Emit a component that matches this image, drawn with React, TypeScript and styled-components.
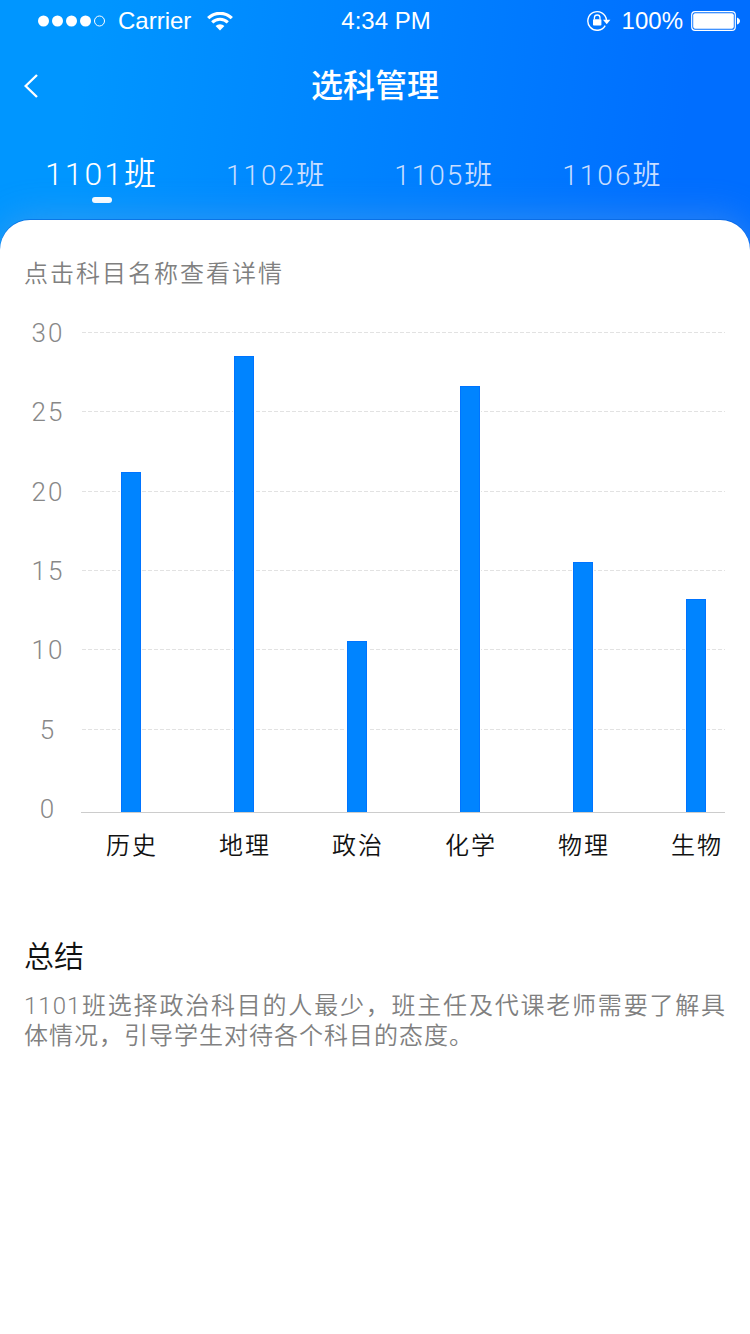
import React, { useState } from "react";
import styled, { createGlobalStyle } from "styled-components";

const GlobalStyle = createGlobalStyle`
  *, *::before, *::after { box-sizing: border-box; }
  body {
    margin: 0;
    background: #fff;
    font-family: Roboto, "Noto Sans CJK SC", sans-serif;
    font-weight: 350;
  }
  h1, h2, p, ul { margin: 0; padding: 0; }
  button {
    border: 0;
    padding: 0;
    background: none;
    color: inherit;
    font: inherit;
    cursor: pointer;
  }
`;

const Page = styled.div`
  display: flex;
  flex-direction: column;
  min-height: 100vh;
`;

const Header = styled.header`
  padding-bottom: 30px;
  margin-bottom: -30px;
  color: #fff;
  background: linear-gradient(97deg, #0096ff 12%, #006eff 90%);
`;

const StatusBar = styled.div`
  display: grid;
  grid-template-columns: 1fr auto 1fr;
  align-items: center;
  height: 42px;
  padding: 0 10px 0 32px;
  font: 400 24px/28px "Liberation Sans", Arial, sans-serif;
`;

const StatusGroup = styled.div<{ $end?: boolean }>`
  display: flex;
  align-items: center;
  justify-content: ${(p) => (p.$end ? "flex-end" : "flex-start")};
  padding-left: 6px;
`;

const SignalIcon = styled.svg`
  margin-right: 13px;
`;

const WifiIcon = styled.svg`
  margin-left: 16px;
`;

const LockIcon = styled.svg`
  margin-right: 11px;
`;

const BatteryIcon = styled.svg`
  margin-left: 8px;
`;

const NavBar = styled.nav`
  display: grid;
  grid-template-columns: 1fr auto 1fr;
  align-items: center;
  height: 88px;
  padding: 0 24px;
`;

const BackButton = styled.button`
  display: flex;
  justify-self: start;
  padding: 16px 16px 16px 0;
`;

const Title = styled.h1`
  font-size: 32px;
  line-height: 40px;
  font-weight: 500;
`;

const TabList = styled.div`
  display: flex;
  align-items: baseline;
  gap: 68px;
  height: 90px;
  padding: 24px 45px 0;
`;

const Tab = styled.button<{ $active: boolean }>`
  display: flex;
  flex-direction: column;
  align-items: center;
  gap: 3px;
  flex: none;
  font-size: ${(p) => (p.$active ? 32 : 28)}px;
  line-height: 40px;
  letter-spacing: 2px;
  color: ${(p) => (p.$active ? "#fff" : "#c9deff")};

  &::after {
    content: "";
    width: 20px;
    height: 6px;
    border-radius: 3px;
    background: ${(p) => (p.$active ? "#fff" : "transparent")};
  }
`;

const Card = styled.main`
  flex: 1;
  padding: 38px 24px;
  border-radius: 30px 30px 0 0;
  background: #fff;
  box-shadow: 0 -1px 0 rgba(0, 96, 220, 0.6), 0 -2px 36px rgba(110, 165, 225, 0.45);
`;

const Hint = styled.p`
  font-size: 24px;
  line-height: 32px;
  letter-spacing: 2px;
  color: #808080;
`;

const Chart = styled.section`
  display: grid;
  grid-template-columns: 57px 1fr;
  margin-top: 42px;
`;

const Scale = styled.div`
  display: flex;
  flex-direction: column;
  align-items: center;
  justify-content: space-between;
  height: 508px;
  margin: -15px 0 -12px;
  padding-right: 9px;
  font-size: 26px;
  line-height: 32px;
  letter-spacing: 2px;
  color: #888;
`;

const Plot = styled.div`
  display: grid;
  height: 481px;
  margin-right: 1px;
  border-bottom: 1px solid #ccc;
`;

const GridLines = styled.div`
  grid-area: 1 / 1;
  display: grid;
  grid-template-rows: repeat(6, 1fr);
  padding: 0 0 4px 1px;
`;

const GridLine = styled.div`
  height: 1px;
  background: repeating-linear-gradient(90deg, #e2e2e2 0 4px, #fff 4px 6px);
`;

const Bars = styled.div`
  grid-area: 1 / 1;
  display: flex;
  align-items: flex-end;
  justify-content: space-between;
  padding: 0 3px 0 24px;
`;

const Bar = styled.div`
  width: 20px;
  margin: 0 16px;
  border: solid #0074ff;
  border-width: 1px 1px 0;
  background: #0084ff;
  box-shadow: 0 0 0 1px #fff;
  clip-path: inset(-1px -1px 0);
`;

const Subjects = styled.div`
  grid-column: 2;
  display: flex;
  justify-content: space-between;
  margin-top: 17px;
  padding: 0 3px 0 25px;
`;

const Subject = styled.button`
  width: 52px;
  font-size: 24px;
  line-height: 32px;
  letter-spacing: 2px;
  white-space: nowrap;
  color: #111;
`;

const Summary = styled.section`
  margin-top: 75px;
`;

const SummaryTitle = styled.h2`
  font-size: 30px;
  line-height: 40px;
  font-weight: 350;
  color: #111;
`;

const SummaryText = styled.p`
  margin-top: 14px;
  font-size: 24px;
  line-height: 30px;
  letter-spacing: 1px;
  text-align: justify;
  color: #808080;
`;

const classes = ["1101班", "1102班", "1105班", "1106班"];
const ticks = [30, 25, 20, 15, 10, 5, 0];
const maxValue = 30;
const subjects = [
  { name: "历史", value: 21.25 },
  { name: "地理", value: 28.5 },
  { name: "政治", value: 10.7 },
  { name: "化学", value: 26.6 },
  { name: "物理", value: 15.6 },
  { name: "生物", value: 13.3 },
];

export default function App() {
  const [active, setActive] = useState(0);

  return (
    <Page>
      <GlobalStyle />
      <Header>
        <StatusBar>
          <StatusGroup>
            <SignalIcon width="67" height="12" viewBox="0 0 67 12" fill="#fff" aria-hidden="true">
              <circle cx="5.5" cy="6" r="5.5" />
              <circle cx="19.5" cy="6" r="5.5" />
              <circle cx="33.5" cy="6" r="5.5" />
              <circle cx="47.5" cy="6" r="5.5" />
              <circle cx="61.5" cy="6" r="5" fill="none" stroke="#fff" />
            </SignalIcon>
            <span>Carrier</span>
            <WifiIcon width="26" height="19" viewBox="0 0 26 19" fill="none" stroke="#fff" aria-hidden="true">
              <path d="M1.2 6.2a16.8 16.8 0 0 1 23.6 0" strokeWidth="3.2" />
              <path d="M5.2 10.4a11 11 0 0 1 15.6 0" strokeWidth="3" />
              <path d="M13 18.6 8.6 14a6.2 6.2 0 0 1 8.8 0z" fill="#fff" stroke="none" />
            </WifiIcon>
          </StatusGroup>
          <span>4:34 PM</span>
          <StatusGroup $end>
            <LockIcon width="24" height="22" viewBox="0 0 24 22" fill="none" stroke="#fff" aria-hidden="true">
              <path d="M18.2 15.6A9.3 9.3 0 1 1 19.4 10" strokeWidth="1.4" />
              <path d="M16 9.8h7.4l-3.7 4.4z" fill="#fff" stroke="none" />
              <path d="M7.4 9.6V7.8a2.8 2.8 0 0 1 5.6 0v1.8" strokeWidth="1.3" />
              <rect x="6" y="9.2" width="8.4" height="6.4" rx="0.8" fill="#fff" stroke="none" />
            </LockIcon>
            <span>100%</span>
            <BatteryIcon width="49" height="20" viewBox="0 0 49 20" aria-hidden="true">
              <rect x="0.7" y="0.7" width="43.6" height="18.6" rx="3.4" fill="none" stroke="#fff" strokeWidth="1.2" />
              <rect x="2.2" y="2.2" width="40.6" height="15.6" rx="2" fill="#fff" />
              <path d="M46 6.4c4 1.4 4 5.8 0 7.2z" fill="#fff" />
            </BatteryIcon>
          </StatusGroup>
        </StatusBar>
        <NavBar>
          <BackButton type="button" aria-label="返回">
            <svg width="14" height="24" viewBox="0 0 14 24" fill="none" stroke="#fff" strokeWidth="2.4" aria-hidden="true">
              <path d="M13 1 1.6 12 13 23" />
            </svg>
          </BackButton>
          <Title>选科管理</Title>
        </NavBar>
        <TabList role="tablist">
          {classes.map((name, i) => (
            <Tab
              key={name}
              type="button"
              role="tab"
              aria-selected={i === active}
              $active={i === active}
              onClick={() => setActive(i)}
            >
              {name}
            </Tab>
          ))}
        </TabList>
      </Header>
      <Card>
        <Hint>点击科目名称查看详情</Hint>
        <Chart>
          <Scale>
            {ticks.map((t) => (
              <span key={t}>{t}</span>
            ))}
          </Scale>
          <Plot>
            <GridLines>
              {ticks.slice(0, -1).map((t) => (
                <GridLine key={t} />
              ))}
            </GridLines>
            <Bars>
              {subjects.map((s) => (
                <Bar key={s.name} style={{ height: `${(s.value / maxValue) * 100}%` }} />
              ))}
            </Bars>
          </Plot>
          <Subjects>
            {subjects.map((s) => (
              <Subject key={s.name} type="button">
                {s.name}
              </Subject>
            ))}
          </Subjects>
        </Chart>
        <Summary>
          <SummaryTitle>总结</SummaryTitle>
          <SummaryText>
            1101班选择政治科目的人最少，班主任及代课老师需要了解具体情况，引导学生对待各个科目的态度。
          </SummaryText>
        </Summary>
      </Card>
    </Page>
  );
}
